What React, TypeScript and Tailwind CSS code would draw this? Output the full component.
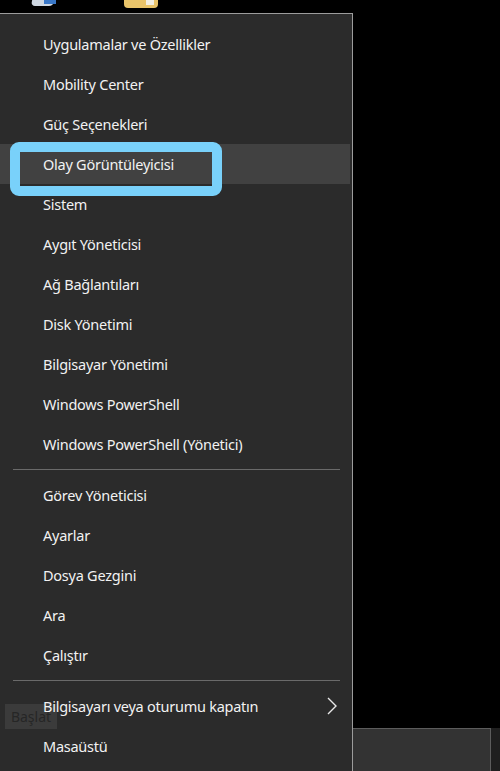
import React from "react";

type Entry = { label: string; sub?: boolean } | "sep";

const entries: Entry[] = [
  { label: "Uygulamalar ve Özellikler" },
  { label: "Mobility Center" },
  { label: "Güç Seçenekleri" },
  { label: "Olay Görüntüleyicisi" },
  { label: "Sistem" },
  { label: "Aygıt Yöneticisi" },
  { label: "Ağ Bağlantıları" },
  { label: "Disk Yönetimi" },
  { label: "Bilgisayar Yönetimi" },
  { label: "Windows PowerShell" },
  { label: "Windows PowerShell (Yönetici)" },
  "sep",
  { label: "Görev Yöneticisi" },
  { label: "Ayarlar" },
  { label: "Dosya Gezgini" },
  { label: "Ara" },
  { label: "Çalıştır" },
  "sep",
  { label: "Bilgisayarı veya oturumu kapatın", sub: true },
  { label: "Masaüstü" },
];

const HOVERED = "Olay Görüntüleyicisi";

function Chevron() {
  return (
    <svg width="12" height="18" viewBox="0 0 12 18" className="absolute right-[12px] top-[11px]">
      <polyline points="2,1 10,9 2,17" fill="none" stroke="#e8e8e8" strokeWidth="1.4" />
    </svg>
  );
}

function MenuRow({ label, sub }: { label: string; sub?: boolean }) {
  const active = label === HOVERED;
  return (
    <div className={`relative flex h-10 items-center pl-[43px] pt-[2px] ${active ? "bg-[#414141]" : ""}`}>
      <span className="relative z-10 text-[14.5px] tracking-[-0.25px] text-[#f2f2f2]">{label}</span>
      {sub && <Chevron />}
    </div>
  );
}

export default function App() {
  return (
    <div
      className="relative flex h-[771px] w-[500px] flex-col overflow-hidden bg-black"
      style={{ fontFamily: '"Noto Sans", "Open Sans", sans-serif' }}
    >
      {/* desktop icons peeking above the menu */}
      <div className="relative h-[13px] shrink-0">
        <div className="absolute left-[32px] top-[-4px] h-[10px] w-[22px] -skew-x-12 rounded-sm bg-[#cfd8e3]" />
        <div className="absolute left-[44px] top-[-2px] h-[6px] w-[12px] bg-[#3a78c8]" />
        <div className="absolute left-[124px] top-[-4px] h-[12px] w-[34px] rounded-sm bg-[#e9c46a]" />
        <div className="absolute left-[146px] top-[-4px] h-[9px] w-[8px] bg-[#f3efe3]" />
      </div>

      <div className="flex flex-1">
        <div className="relative w-[353px] shrink-0 border-t border-r border-[#9c9c9c] bg-[#2b2b2b] pt-[10px] pr-[2px]">
          {entries.map((e, i) =>
            e === "sep" ? (
              <div key={i} className="flex h-[11px] items-center pl-[13px] pr-[10px]">
                <div className="h-px w-full bg-[#6a6a6a]" />
              </div>
            ) : (
              <MenuRow key={i} label={e.label} sub={e.sub} />
            )
          )}

          {/* greyed-out tooltip behind the shutdown row */}
          <div className="absolute left-[5px] top-[690px] flex h-[25px] w-[52px] items-center justify-center bg-[#3b3b3b] text-[14px] text-[#262626]">
            Başlat
          </div>

          {/* hand-drawn highlight ring */}
          <div className="absolute left-[10px] top-[128px] h-[54px] w-[212px] rounded-[9px] border-[10px] border-[#79d1fa]" />
        </div>

        <div className="flex flex-1 flex-col">
          <div className="flex-1" />
          <div className="flex h-[43px]">
            <div className="w-[138px] border-t border-r border-[#5c5c5c] bg-[#333333]" />
            <div className="flex-1 bg-[#1f1f1f]" />
          </div>
        </div>
      </div>
    </div>
  );
}
